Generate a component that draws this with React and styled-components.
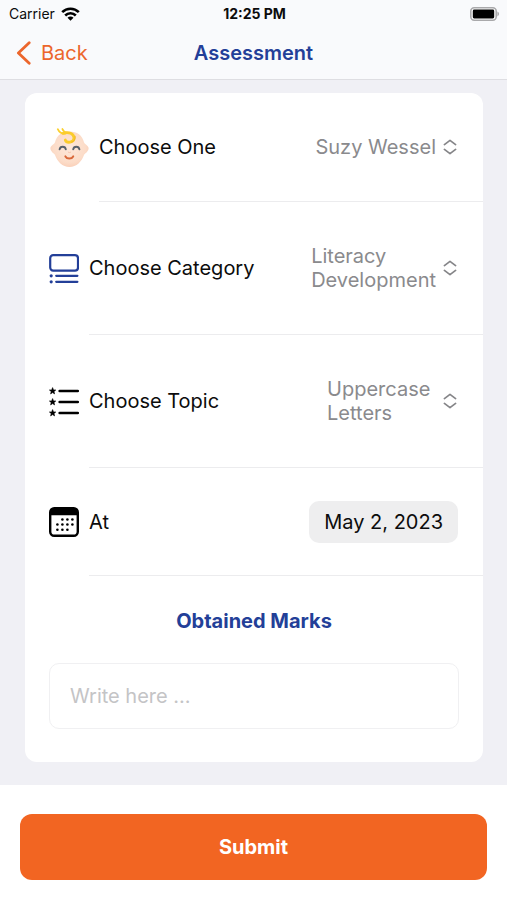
import React, { useState } from 'react';
import styled, { createGlobalStyle } from 'styled-components';

const GlobalStyle = createGlobalStyle`
  * {
    box-sizing: border-box;
  }

  body {
    margin: 0;
    background: #ffffff;
    color: #0c0c0c;
    font-family: Inter, 'Liberation Sans', sans-serif;
    font-size: 20px;
    line-height: 24px;
  }

  button,
  input,
  select {
    font: inherit;
    color: inherit;
  }
`;

const Page = styled.div`
  display: flex;
  flex-direction: column;
  min-height: 100vh;
`;

const Header = styled.header`
  background: #f9fafc;
  border-bottom: 1px solid #dedee2;
`;

const Bar = styled.div`
  display: grid;
  grid-template-columns: 1fr auto 1fr;
  align-items: center;
`;

const StatusBar = styled(Bar)`
  height: 27px;
  padding: 0 7px 0 9px;
  font-size: 14px;
  line-height: 16px;
`;

const Carrier = styled.span`
  display: flex;
  align-items: center;
  gap: 6px;
`;

const Clock = styled.time`
  font-weight: 700;
`;

const Battery = styled.svg`
  justify-self: end;
`;

const NavBar = styled(Bar)`
  height: 52px;
  padding: 0 16px;
`;

const BackLink = styled.a`
  display: flex;
  align-items: center;
  justify-self: start;
  gap: 9px;
  color: #ec662c;
  text-decoration: none;
`;

const Title = styled.h1`
  margin: 0;
  color: #233f98;
  font-size: 20px;
  font-weight: 600;
`;

const Main = styled.main`
  flex: 1;
  padding: 13px 24px 23px 25px;
  background: #f0f0f5;
`;

const Card = styled.form`
  background: #ffffff;
  border-radius: 12px;
`;

const Row = styled.div`
  display: flex;
  align-items: center;
  gap: 10px;
  padding-left: 24px;

  > svg {
    flex: none;
  }
`;

const RowBody = styled.div`
  display: flex;
  flex: 1;
  align-items: center;
  justify-content: space-between;
  min-height: 108px;
  padding-right: 25px;
  border-bottom: 1px solid #ececee;
`;

const Picker = styled.div`
  position: relative;
  display: flex;
  align-items: center;
  gap: 6px;
  padding: 42px 0;
  color: #8a8a8d;
`;

const PickerText = styled.span`
  white-space: pre;
`;

const DatePill = styled(Picker)`
  padding: 9px 15px;
  background: #eeeeef;
  border-radius: 10px;
  color: #0c0c0c;
`;

/* the native control sits over the styled value and opens the system picker */
const NativeSelect = styled.select`
  position: absolute;
  inset: 0;
  width: 100%;
  height: 100%;
  opacity: 0;
  cursor: pointer;
`;

const Marks = styled.div`
  display: flex;
  flex-direction: column;
  gap: 30px;
  padding: 33px 24px;
`;

const MarksLabel = styled.label`
  color: #233f98;
  font-weight: 700;
  text-align: center;
`;

const MarksInput = styled.input`
  width: 100%;
  height: 66px;
  padding: 0 20px;
  background: #ffffff;
  border: 1px solid #f0f0f2;
  border-radius: 10px;

  &::placeholder {
    color: #c4c4c6;
    opacity: 1;
  }
`;

const Footer = styled.footer`
  padding: 29px 20px 20px;
  background: #ffffff;
`;

const SubmitButton = styled.button`
  width: 100%;
  height: 66px;
  background: #f26522;
  border: 0;
  border-radius: 12px;
  color: #ffffff;
  font-weight: 700;
  cursor: pointer;
`;

const WifiIcon = () => (
  <svg width="19" height="14" viewBox="0 0 19 14" fill="none" stroke="#000" strokeWidth="2.6">
    <path d="M1.2 5.2a11.7 11.7 0 0 1 16.6 0" />
    <path d="M4.2 8.5a7.5 7.5 0 0 1 10.6 0" />
    <path d="M6.5 10.8a4.200 4.200 0 0 1 6 0L9.500 13.800z" fill="#000" stroke="none" />
  </svg>
);

const BatteryIcon = () => (
  <Battery width="30" height="14" viewBox="0 0 30 14">
    <rect x="0.8" y="0.8" width="25.4" height="12.4" rx="3.4" fill="#fff" stroke="#a9a9ab" strokeWidth="1.6" />
    <rect x="2.8" y="2.6" width="21.4" height="8.8" rx="1.4" fill="#000" />
    <path d="M27.4 4.6c2.2.9 2.2 3.9 0 4.8z" fill="#a9a9ab" />
  </Battery>
);

const BackIcon = () => (
  <svg width="16" height="24" viewBox="0 0 16 24" fill="none" stroke="currentColor" strokeWidth="2.8" strokeLinecap="round" strokeLinejoin="round">
    <path d="M13.2 1.8 2.4 12l10.8 10.2" />
  </svg>
);

const UpDownIcon = () => (
  <svg width="16" height="18" viewBox="0 0 16 18" fill="none" stroke="#858588" strokeWidth="1.7" strokeLinecap="round" strokeLinejoin="round">
    <path d="M2.4 6.6 8 2.4l5.6 4.2M2.4 11.4 8 15.6l5.6-4.2" />
  </svg>
);

const BabyIcon = () => (
  <svg width="40" height="40" viewBox="0 0 40 40" fill="none" strokeLinecap="round">
    <defs>
      <radialGradient id="skin" cx="0.5" cy="0.45" r="0.6">
        <stop offset="0" stopColor="#fde8da" />
        <stop offset="0.7" stopColor="#fcdcc8" />
        <stop offset="1" stopColor="#f9ccb4" />
      </radialGradient>
    </defs>
    <path
      d="M20.5 3.5c7.500 0 12.800 3.700 14.600 11 .4 1.500 4.500 3 4.500 5.800 0 2.700-2.900 5-4.400 6.200C32.800 33.500 27.500 39 20.500 39S8.200 33.500 5.800 26.500C4.300 25.300 1.400 23 1.400 20.300c0-2.800 4.100-4.300 4.500-5.800C7.700 7.200 13 3.500 20.500 3.500z"
      fill="url(#skin)"
    />
    <path d="M8.800 1.200c1.400 3 4 4.800 7.400 4.400M13.400 1c.8 2.200 2.600 3.600 5 3.800" stroke="#fbd02e" strokeWidth="1.800" />
    <path d="M14 5.400c5.600-2 11 .2 11 4.600 0 4.800-7.400 5.600-8.700 2" stroke="#fbcc2c" strokeWidth="2.800" />
    <path d="M26.200 8.200c.6 3-1 5.200-3.600 6" stroke="#eeb01f" strokeWidth="0.800" />
    <path d="M10.600 21.400c.6-3.600 5.600-3.600 6.200 0M24.200 21.400c.6-3.600 5.600-3.600 6.200 0" stroke="#58616b" strokeWidth="1.900" />
    <path d="M19.300 24.200c.8.500 1.600.5 2.400 0" stroke="#f6c3ab" strokeWidth="1" />
    <path d="M16.400 28.400c1.600 2.800 6.200 2.800 7.800 0" stroke="#d9683a" strokeWidth="2" />
  </svg>
);

const CategoryIcon = () => (
  <svg width="30" height="30" viewBox="0 0 30 30" fill="none" stroke="#233f98" strokeWidth="2.200" strokeLinecap="round">
    <rect x="1.200" y="1.200" width="27.800" height="15.400" rx="3" />
    <path d="M7.200 21.800h21.200M7.200 27.800h21.200" />
    <circle cx="2.200" cy="21.800" r="1.600" fill="#233f98" stroke="none" />
    <circle cx="2.200" cy="27.800" r="1.600" fill="#233f98" stroke="none" />
  </svg>
);

const TopicIcon = () => (
  <svg width="30" height="30" viewBox="0 0 30 30">
    {[4, 15, 26].map((y) => (
      <g key={y} transform={`translate(3.600 ${y})`}>
        <path
          d="M0-3.400.9-1.100 3.200-1 1.400.5 2 2.900 0 1.600-2 2.900-1.400.5-3.200-1-.9-1.100z"
          fill="#000"
          stroke="#000"
          strokeWidth="0.600"
          strokeLinejoin="round"
        />
        <path d="M7 0h18.200" stroke="#000" strokeWidth="2.500" strokeLinecap="round" />
      </g>
    ))}
  </svg>
);

const calendarDots = [
  [13.400, 12.500], [18.400, 12.500], [23.400, 12.500],
  [8.400, 17.500], [13.400, 17.500], [18.400, 17.500], [23.400, 17.500],
  [8.400, 22.700], [13.400, 22.700], [18.400, 22.700],
];

const CalendarIcon = () => (
  <svg width="30" height="30" viewBox="0 0 30 30">
    <rect x="1.200" y="1.200" width="27.600" height="27.600" rx="4" fill="#fff" stroke="#000" strokeWidth="2.400" />
    <path d="M1 8.200V5a4 4 0 0 1 4-4h20a4 4 0 0 1 4 4v3.200z" fill="#000" />
    {calendarDots.map(([x, y]) => (
      <circle key={`${x}-${y}`} cx={x} cy={y} r="1.300" fill="#000" />
    ))}
  </svg>
);

const fields = [
  { id: 'child', label: 'Choose One', value: 'Suzy Wessel', Icon: BabyIcon },
  { id: 'category', label: 'Choose Category', value: 'Literacy \nDevelopment', Icon: CategoryIcon },
  { id: 'topic', label: 'Choose Topic', value: 'Uppercase \nLetters', Icon: TopicIcon },
];

const SelectRow = ({ id, label, value, Icon }) => (
  <Row>
    <Icon />
    <RowBody>
      <label htmlFor={id}>{label}</label>
      <Picker>
        <PickerText aria-hidden="true">{value}</PickerText>
        <UpDownIcon />
        <NativeSelect id={id} defaultValue={value}>
          <option value={value}>{value}</option>
        </NativeSelect>
      </Picker>
    </RowBody>
  </Row>
);

const formatDate = (value) =>
  new Date(`${value}T00:00:00`).toLocaleDateString('en-US', {
    month: 'short',
    day: 'numeric',
    year: 'numeric',
  });

const App = () => {
  const [date, setDate] = useState('2023-05-02');

  return (
    <Page>
      <GlobalStyle />
      <Header>
        <StatusBar>
          <Carrier>
            Carrier
            <WifiIcon />
          </Carrier>
          <Clock>12:25 PM</Clock>
          <BatteryIcon />
        </StatusBar>
        <NavBar>
          <BackLink href="#back">
            <BackIcon />
            Back
          </BackLink>
          <Title>Assessment</Title>
        </NavBar>
      </Header>
      <Main>
        <Card id="assessment" onSubmit={(e) => e.preventDefault()}>
          {fields.map((field) => (
            <SelectRow key={field.id} {...field} />
          ))}
          <Row>
            <CalendarIcon />
            <RowBody>
              <label htmlFor="date">At</label>
              <DatePill>
                <span aria-hidden="true">{formatDate(date)}</span>
                <NativeSelect
                  as="input"
                  type="date"
                  id="date"
                  value={date}
                  onChange={(e) => e.target.value && setDate(e.target.value)}
                />
              </DatePill>
            </RowBody>
          </Row>
          <Marks>
            <MarksLabel htmlFor="marks">Obtained Marks</MarksLabel>
            <MarksInput id="marks" type="text" placeholder="Write here ..." />
          </Marks>
        </Card>
      </Main>
      <Footer>
        <SubmitButton type="submit" form="assessment">Submit</SubmitButton>
      </Footer>
    </Page>
  );
};

export default App;
